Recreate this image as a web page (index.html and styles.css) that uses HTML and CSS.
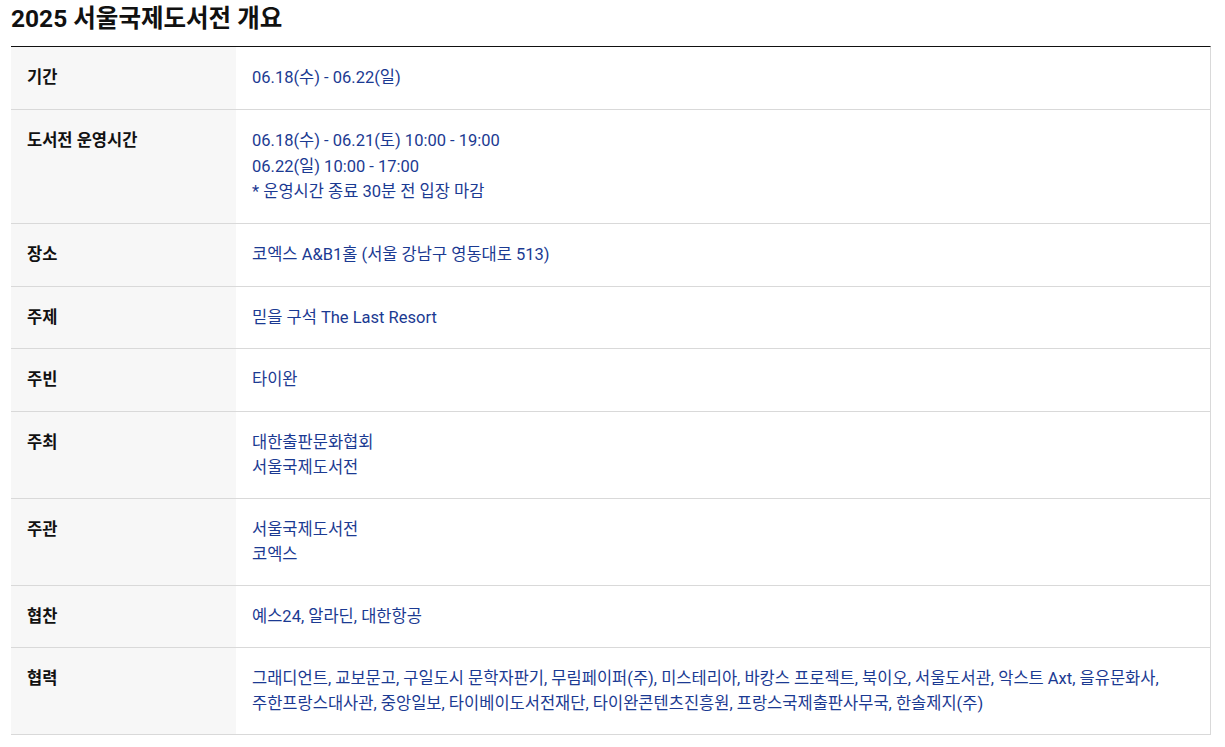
FILE: index.html
```html
<!DOCTYPE html>
<html lang="ko">
<head>
<meta charset="utf-8">
<title>2025 서울국제도서전 개요</title>
<link rel="stylesheet" href="styles.css">
</head>
<body>
<div class="wrap">
  <h2 class="title">2025 서울국제도서전 개요</h2>
  <div class="info">
    <div class="row">
      <div class="label">기간</div>
      <div class="value">06.18(수) - 06.22(일)</div>
    </div>
    <div class="row">
      <div class="label">도서전 운영시간</div>
      <div class="value tall">06.18(수) - 06.21(토) 10:00 - 19:00<br>06.22(일) 10:00 - 17:00<br>* 운영시간 종료 30분 전 입장 마감</div>
    </div>
    <div class="row">
      <div class="label">장소</div>
      <div class="value">코엑스 A&amp;B1홀 (서울 강남구 영동대로 513)</div>
    </div>
    <div class="row">
      <div class="label">주제</div>
      <div class="value">믿을 구석 The Last Resort</div>
    </div>
    <div class="row">
      <div class="label">주빈</div>
      <div class="value">타이완</div>
    </div>
    <div class="row">
      <div class="label">주최</div>
      <div class="value">대한출판문화협회<br>서울국제도서전</div>
    </div>
    <div class="row">
      <div class="label">주관</div>
      <div class="value">서울국제도서전<br>코엑스</div>
    </div>
    <div class="row">
      <div class="label">협찬</div>
      <div class="value">예스24, 알라딘, 대한항공</div>
    </div>
    <div class="row">
      <div class="label">협력</div>
      <div class="value">그래디언트, 교보문고, 구일도시 문학자판기, 무림페이퍼(주), 미스테리아, 바캉스 프로젝트, 북이오, 서울도서관, 악스트 Axt, 을유문화사,<br>주한프랑스대사관, 중앙일보, 타이베이도서전재단, 타이완콘텐츠진흥원, 프랑스국제출판사무국, 한솔제지(주)</div>
    </div>
  </div>
</div>
</body>
</html>
```

FILE: styles.css
```css
html, body {
  margin: 0;
  padding: 0;
  background: #fff;
}
body {
  font-family: Roboto, "Noto Sans CJK KR", sans-serif;
  color: #111;
}
.wrap {
  width: 1200px;
  margin-left: 11px;
  padding-top: 4px;
}
.title {
  margin: 0 0 13px;
  font-size: 24.5px;
  line-height: 29px;
  font-weight: 700;
  color: #111;
}
.info {
  border-top: 1px solid #111;
  border-right: 1px solid #d9d9d9;
}
.row {
  display: flex;
  border-bottom: 1px solid #d9d9d9;
}
.label {
  flex: 0 0 225px;
  box-sizing: border-box;
  background: #f7f7f7;
  padding: 18px 16px;
  font-size: 16.5px;
  line-height: 25.5px;
  font-weight: 700;
  color: #111;
}
.value {
  flex: 1;
  padding: 18px 16px;
  font-size: 16.5px;
  line-height: 25px;
  color: #1b3a92;
}
.value.tall {
  line-height: 25.5px;
  padding-top: 18.5px;
  padding-bottom: 18.5px;
}
```
